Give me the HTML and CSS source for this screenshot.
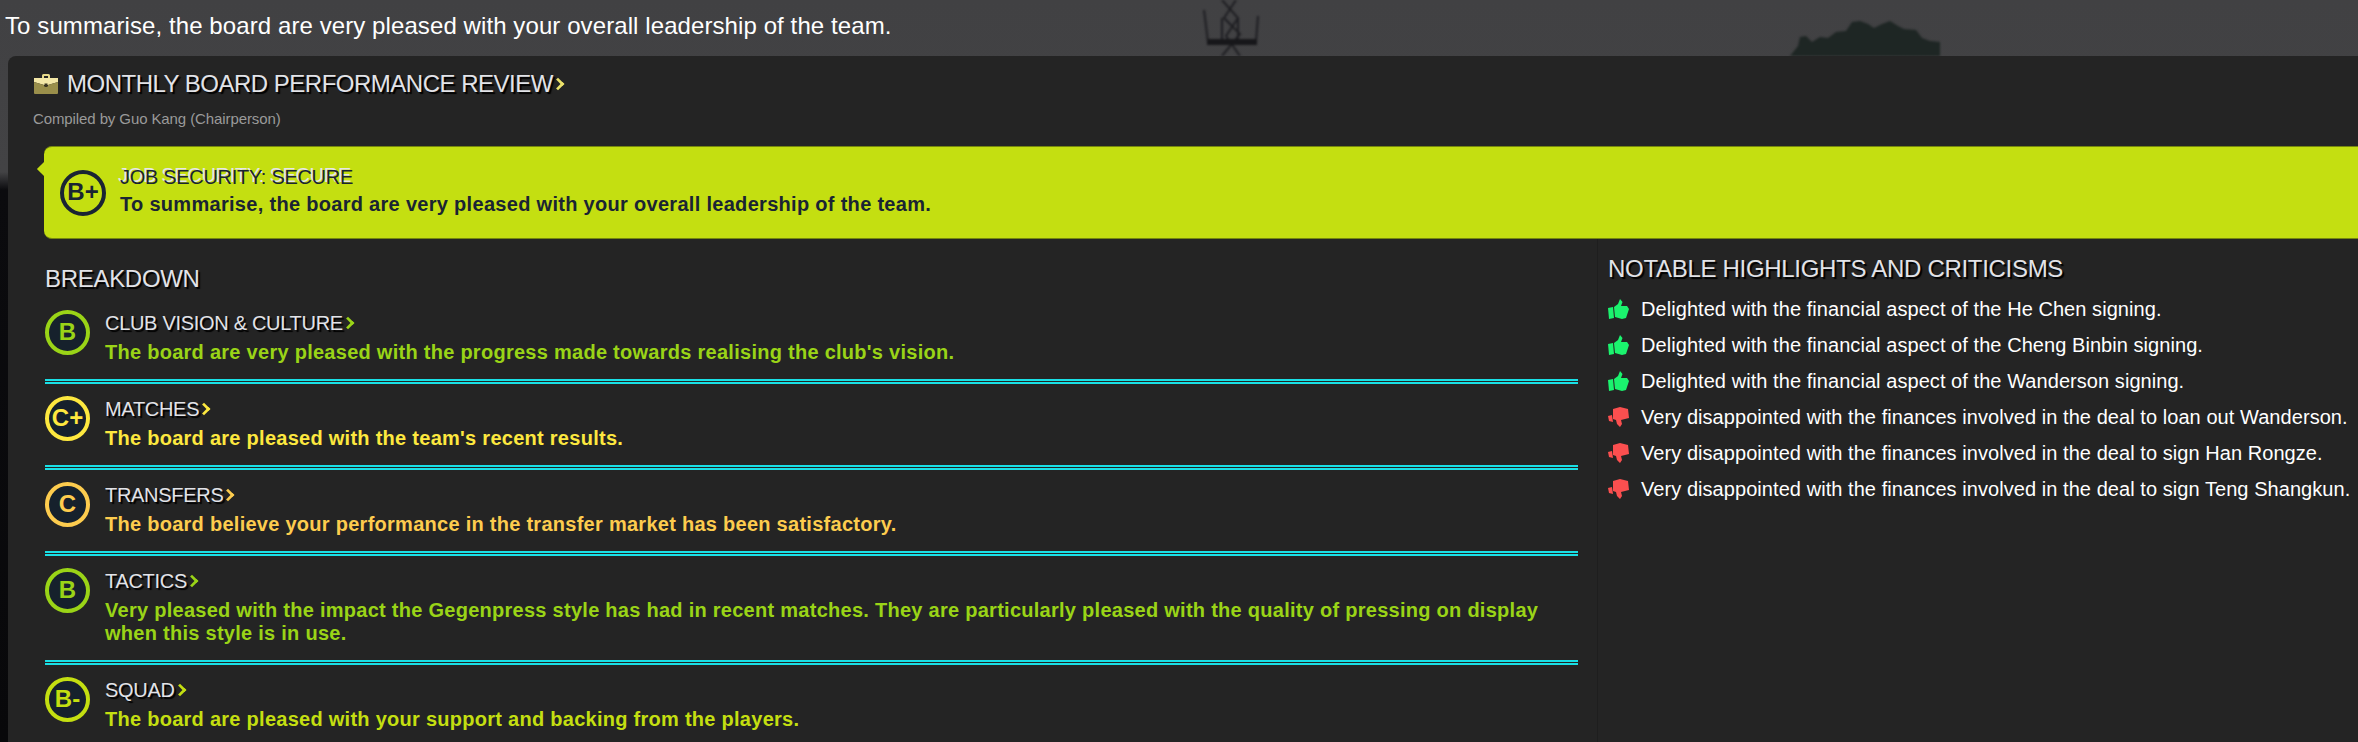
FILE: index.html
```html
<!DOCTYPE html>
<html lang="en">
<head>
    <meta charset="UTF-8">
    <title>Monthly Board Performance Review</title>
    <link rel="stylesheet" href="styles.css">
</head>
<body>

    <!-- Photo backdrop showing above the panel -->
    <svg class="backdrop" width="2358" height="56" viewBox="0 0 2358 56">
        <g fill="none" stroke="#1e1e22" stroke-width="2">
            <path d="M1204 10L1208 42M1258 16L1256 42M1222 0L1238 18L1226 36L1240 56M1236 0L1224 18L1240 34L1222 56M1222 18V42M1238 18V42"/>
        </g>
        <rect x="1207" y="39" width="50" height="6" fill="#17171a"/>
        <path d="M1790 56L1798 46L1800 37L1806 36L1812 42L1820 37L1828 38L1836 32L1846 31L1852 22L1860 21L1868 24L1874 28L1882 24L1890 21L1898 26L1904 29L1916 30L1922 38L1930 41L1940 42V56Z" fill="#1e2624"/>
    </svg>

    <p class="subject">To summarise, the board are very pleased with your overall leadership of the team.</p>

    <main class="panel">
        <h1 class="panel-title">
            <svg class="briefcase" width="26" height="22" viewBox="0 0 26 22">
                <path d="M9 5V2.500Q9 1 10.500 1H15.500Q17 1 17 2.500V5H15V3H11V5Z" fill="#e6d98a"/>
                <path d="M1 5H25V9L15 12H11L1 9Z" fill="#f3e7a6"/>
                <path d="M1 9L11 12V13H15V12L25 9V20Q25 21 24 21H2Q1 21 1 20Z" fill="#9a8f4b"/>
                <rect x="11.500" y="10.500" width="3" height="3.500" fill="#3a3520"/>
            </svg>
            <span class="shadowed">MONTHLY BOARD PERFORMANCE REVIEW</span><span class="chevron"></span>
        </h1>
        <p class="compiled">Compiled by Guo Kang (Chairperson)</p>

        <div class="callout">
            <div class="callout-grade">B+</div>
            <div>
                <div class="callout-title">JOB SECURITY: SECURE</div>
                <div class="callout-text">To summarise, the board are very pleased with your overall leadership of the team.</div>
            </div>
        </div>

        <div class="columns">
            <section class="breakdown">
                <h2 class="section-title shadowed">BREAKDOWN</h2>

                <div class="row grade-b">
                    <div class="grade">B</div>
                    <div>
                        <h3 class="row-title"><span class="shadowed">CLUB VISION &amp; CULTURE</span><span class="chevron"></span></h3>
                        <p class="row-text">The board are very pleased with the progress made towards realising the club's vision.</p>
                    </div>
                </div>

                <div class="row grade-cplus">
                    <div class="grade">C+</div>
                    <div>
                        <h3 class="row-title"><span class="shadowed">MATCHES</span><span class="chevron"></span></h3>
                        <p class="row-text">The board are pleased with the team's recent results.</p>
                    </div>
                </div>

                <div class="row grade-c">
                    <div class="grade">C</div>
                    <div>
                        <h3 class="row-title"><span class="shadowed">TRANSFERS</span><span class="chevron"></span></h3>
                        <p class="row-text">The board believe your performance in the transfer market has been satisfactory.</p>
                    </div>
                </div>

                <div class="row grade-b">
                    <div class="grade">B</div>
                    <div>
                        <h3 class="row-title"><span class="shadowed">TACTICS</span><span class="chevron"></span></h3>
                        <p class="row-text">Very pleased with the impact the Gegenpress style has had in recent matches. They are particularly pleased with the quality of pressing on display when this style is in use.</p>
                    </div>
                </div>

                <div class="row grade-bminus">
                    <div class="grade">B-</div>
                    <div>
                        <h3 class="row-title"><span class="shadowed">SQUAD</span><span class="chevron"></span></h3>
                        <p class="row-text">The board are pleased with your support and backing from the players.</p>
                    </div>
                </div>
            </section>

            <section class="notes">
                <h2 class="section-title shadowed">NOTABLE HIGHLIGHTS AND CRITICISMS</h2>
                <ul class="note-list">
                    <li><svg class="thumb up" width="21" height="20" viewBox="0 0 21 20"><path d="M0 9L5 8L6 19L1 20ZM6 8L10 5L12 0L14.500 3L13 7H19L21 10L18 19L14 20L7 18Z"/></svg>Delighted with the financial aspect of the He Chen signing.</li>
                    <li><svg class="thumb up" width="21" height="20" viewBox="0 0 21 20"><path d="M0 9L5 8L6 19L1 20ZM6 8L10 5L12 0L14.500 3L13 7H19L21 10L18 19L14 20L7 18Z"/></svg>Delighted with the financial aspect of the Cheng Binbin signing.</li>
                    <li><svg class="thumb up" width="21" height="20" viewBox="0 0 21 20"><path d="M0 9L5 8L6 19L1 20ZM6 8L10 5L12 0L14.500 3L13 7H19L21 10L18 19L14 20L7 18Z"/></svg>Delighted with the financial aspect of the Wanderson signing.</li>
                    <li><svg class="thumb down" width="21" height="20" viewBox="0 0 21 20"><path d="M0 9L4 8L5 15L1 14ZM5 2L12 0L20 2L21 11L13 13L14 17L12 20L9 17L8 13L5 12Z"/></svg>Very disappointed with the finances involved in the deal to loan out Wanderson.</li>
                    <li><svg class="thumb down" width="21" height="20" viewBox="0 0 21 20"><path d="M0 9L4 8L5 15L1 14ZM5 2L12 0L20 2L21 11L13 13L14 17L12 20L9 17L8 13L5 12Z"/></svg>Very disappointed with the finances involved in the deal to sign Han Rongze.</li>
                    <li><svg class="thumb down" width="21" height="20" viewBox="0 0 21 20"><path d="M0 9L4 8L5 15L1 14ZM5 2L12 0L20 2L21 11L13 13L14 17L12 20L9 17L8 13L5 12Z"/></svg>Very disappointed with the finances involved in the deal to sign Teng Shangkun.</li>
                </ul>
            </section>
        </div>
    </main>

</body>
</html>
```

FILE: styles.css
```css
/* General styles */
html,
body {
    height: 100%;
}

body {
    margin: 0;
    font-family: "Liberation Sans", Arial, sans-serif;
    color: #fff;
    background: linear-gradient(to bottom, #414143 0, #434345 172px, #0b0b0e 190px, #08080a 100%);
    display: flex;
    flex-direction: column;
    overflow: hidden;
    position: relative;
}

h1,
h2,
h3,
p,
ul {
    margin: 0;
    padding: 0;
    font-weight: 400;
}

.backdrop {
    position: absolute;
    top: 0;
    left: 0;
    filter: blur(1px);
}

.subject {
    position: relative;
    flex-shrink: 0;
    height: 56px;
    box-sizing: border-box;
    padding: 12px 0 0 5px;
    font-size: 24px;
    line-height: 28px;
    letter-spacing: 0.09px;
}

/* Main panel */
.panel {
    flex: 1;
    min-height: 0;
    margin-left: 8px;
    padding: 14px 0 0 25px;
    background-color: #242424;
    border-radius: 8px 0 0 0;
    position: relative;
}

.shadowed {
    color: #e2e3e8;
    text-shadow: 2px 2px 1px #000;
}

/* Small chevron after a heading, takes the colour of its row */
.chevron {
    display: inline-block;
    width: 7px;
    height: 7px;
    border-top: 3px solid currentColor;
    border-right: 3px solid currentColor;
    transform: rotate(45deg) scale(0.9);
}

.panel-title {
    display: flex;
    align-items: center;
    height: 28px;
    font-size: 24px;
    letter-spacing: -0.5px;
    color: #ece26a;
}

.briefcase {
    margin-right: 8px;
}

.compiled {
    margin-top: 12px;
    font-size: 15px;
    line-height: 18px;
    letter-spacing: -0.1px;
    color: #9a9a9a;
}

/* Job security callout */
.callout {
    display: flex;
    align-items: center;
    gap: 14px;
    height: 93px;
    box-sizing: border-box;
    margin: 18px 0 0 11px;
    padding-left: 16px;
    background-color: #c4df11;
    border-top: 1px solid #76870f;
    border-bottom: 1px solid #76870f;
    border-radius: 8px 0 0 8px;
    color: #1a2433;
    position: relative;
}

.callout::before {
    content: "";
    position: absolute;
    left: -5px;
    top: 17px;
    width: 10px;
    height: 10px;
    background-color: #c4df11;
    transform: rotate(45deg);
}

.callout-grade {
    width: 46px;
    height: 46px;
    box-sizing: border-box;
    border: 4px solid #1a2433;
    border-radius: 50%;
    font-size: 24px;
    font-weight: 700;
    line-height: 36px;
    text-align: center;
}

.callout-title {
    font-size: 20px;
    line-height: 24px;
    letter-spacing: -0.3px;
    text-shadow: -2px -2px 0 #e6e6ea;
    margin-top: -4px;
}

.callout-text {
    font-size: 20px;
    line-height: 26px;
    font-weight: 700;
    letter-spacing: 0.3px;
    margin-top: 2px;
}

/* Two columns */
.columns {
    display: flex;
    margin-left: 12px;
}

.breakdown {
    width: 1533px;
    flex-shrink: 0;
    padding-top: 26px;
}

.notes {
    margin-left: 19px;
    padding: 16px 0 0 10px;
    border-left: 1px solid #1e1e1e;
    flex: 1;
}

.section-title {
    font-size: 24px;
    line-height: 28px;
    letter-spacing: -0.3px;
}

/* Breakdown rows */
.row {
    display: flex;
    gap: 15px;
    padding: 12px 0 15px;
    border-top: 5px double #19e0e6;
}

.breakdown .section-title + .row {
    border-top: 0;
    padding-top: 17px;
}

.grade {
    flex-shrink: 0;
    width: 45px;
    height: 45px;
    box-sizing: border-box;
    border: 4px solid currentColor;
    border-radius: 50%;
    background-color: #16212c;
    font-size: 24px;
    font-weight: 700;
    line-height: 36px;
    text-align: center;
}

.row-title {
    display: flex;
    align-items: center;
    margin-top: 1px;
    font-size: 20px;
    line-height: 24px;
    letter-spacing: -0.3px;
}

.row-text {
    font-size: 20px;
    line-height: 23px;
    font-weight: 700;
    letter-spacing: 0.27px;
    margin-top: 6px;
    padding-right: 30px;
}

.grade-b { color: #9ad417; }
.grade-cplus { color: #fde83f; }
.grade-c { color: #fdcc4e; }
.grade-bminus { color: #c4df11; }

/* Highlights list */
.note-list {
    list-style: none;
    margin-top: 8px;
}

.note-list li {
    display: flex;
    align-items: center;
    gap: 12px;
    height: 36px;
    font-size: 20px;
    letter-spacing: 0.06px;
}

.thumb.up {
    fill: #1bf36e;
}

.thumb.down {
    fill: #fb4f4f;
}
```
